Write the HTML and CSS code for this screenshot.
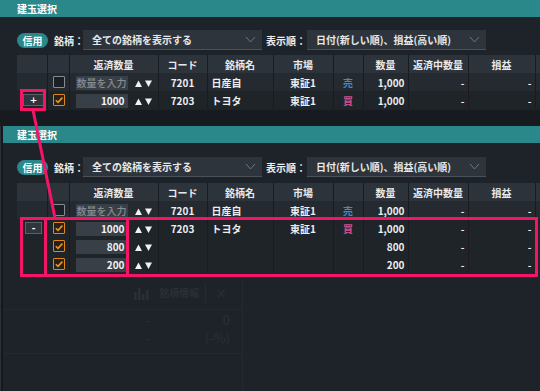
FILE: index.html
```html
<!DOCTYPE html>
<html lang="ja">
<head>
<meta charset="utf-8">
<title>建玉選択</title>
<link rel="stylesheet" href="styles.css">
</head>
<body>
<div class="screen">
  <section class="panel panel-top">
    <div class="titlebar">建玉選択</div>
    <div class="filters">
      <span class="pill">信用</span>
      <span class="flabel flabel-1">銘柄：</span>
      <div class="select">全ての銘柄を表示する<svg class="chev" width="11" height="7" viewBox="0 0 11 7"><polyline points="1,1 5.5,6 10,1"/></svg></div>
      <span class="flabel flabel-2">表示順：</span>
      <div class="select">日付(新しい順)、損益(高い順)<svg class="chev" width="11" height="7" viewBox="0 0 11 7"><polyline points="1,1 5.5,6 10,1"/></svg></div>
    </div>
    <table class="grid">
      <colgroup>
        <col class="w30"><col class="w22"><col class="w89"><col class="w49"><col class="w66"><col class="w60"><col class="w30"><col class="w45"><col class="w60"><col class="w67"><col class="w40">
      </colgroup>
      <thead>
        <tr><th></th><th></th><th>返済数量</th><th>コード</th><th>銘柄名</th><th>市場</th><th></th><th>数量</th><th>返済中数量</th><th>損益</th><th></th></tr>
      </thead>
      <tbody>
        <tr class="alt">
          <td></td>
          <td class="c-cb"><span class="cb"></span></td>
          <td class="c-qty"><span class="qty ph">数量を入力</span><svg class="arrows" width="17" height="7" viewBox="0 0 17 7"><polygon points="0,7 3.5,0.5 7,7"/><polygon points="10,0.5 17,0.5 13.5,7"/></svg></td>
          <td class="ctr">7201</td>
          <td class="lft">日産自</td>
          <td class="ctr">東証1</td>
          <td class="ctr sell">売</td>
          <td class="rgt">1,000</td>
          <td class="rgt">-</td>
          <td class="rgt">-</td>
          <td></td>
        </tr>
        <tr>
          <td class="c-btn"><span class="tbtn">+</span></td>
          <td class="c-cb"><span class="cb on"><svg width="10" height="10" viewBox="0 0 10 10"><polyline points="1.8,5.2 4,7.4 8.4,2.6"/></svg></span></td>
          <td class="c-qty"><span class="qty">1000</span><svg class="arrows" width="17" height="7" viewBox="0 0 17 7"><polygon points="0,7 3.5,0.5 7,7"/><polygon points="10,0.5 17,0.5 13.5,7"/></svg></td>
          <td class="ctr">7203</td>
          <td class="lft">トヨタ</td>
          <td class="ctr">東証1</td>
          <td class="ctr buy">買</td>
          <td class="rgt">1,000</td>
          <td class="rgt">-</td>
          <td class="rgt">-</td>
          <td></td>
        </tr>
      </tbody>
    </table>
  </section>

  <section class="panel panel-bottom">
    <div class="titlebar">建玉選択</div>
    <div class="filters filters-b">
      <span class="pill">信用</span>
      <span class="flabel flabel-1">銘柄：</span>
      <div class="select">全ての銘柄を表示する<svg class="chev" width="11" height="7" viewBox="0 0 11 7"><polyline points="1,1 5.5,6 10,1"/></svg></div>
      <span class="flabel flabel-2">表示順：</span>
      <div class="select">日付(新しい順)、損益(高い順)<svg class="chev" width="11" height="7" viewBox="0 0 11 7"><polyline points="1,1 5.5,6 10,1"/></svg></div>
    </div>
    <table class="grid grid-b">
      <colgroup>
        <col class="w30"><col class="w22"><col class="w89"><col class="w49"><col class="w66"><col class="w60"><col class="w30"><col class="w45"><col class="w60"><col class="w67"><col class="w40">
      </colgroup>
      <thead>
        <tr><th></th><th></th><th>返済数量</th><th>コード</th><th>銘柄名</th><th>市場</th><th></th><th>数量</th><th>返済中数量</th><th>損益</th><th></th></tr>
      </thead>
      <tbody>
        <tr class="alt">
          <td></td>
          <td class="c-cb"><span class="cb"></span></td>
          <td class="c-qty"><span class="qty ph">数量を入力</span><svg class="arrows" width="17" height="7" viewBox="0 0 17 7"><polygon points="0,7 3.5,0.5 7,7"/><polygon points="10,0.5 17,0.5 13.5,7"/></svg></td>
          <td class="ctr">7201</td>
          <td class="lft">日産自</td>
          <td class="ctr">東証1</td>
          <td class="ctr sell">売</td>
          <td class="rgt">1,000</td>
          <td class="rgt">-</td>
          <td class="rgt">-</td>
          <td></td>
        </tr>
        <tr>
          <td class="c-btn"><span class="tbtn tbtn-minus">-</span></td>
          <td class="c-cb"><span class="cb on"><svg width="10" height="10" viewBox="0 0 10 10"><polyline points="1.8,5.2 4,7.4 8.4,2.6"/></svg></span></td>
          <td class="c-qty"><span class="qty">1000</span><svg class="arrows" width="17" height="7" viewBox="0 0 17 7"><polygon points="0,7 3.5,0.5 7,7"/><polygon points="10,0.5 17,0.5 13.5,7"/></svg></td>
          <td class="ctr">7203</td>
          <td class="lft">トヨタ</td>
          <td class="ctr">東証1</td>
          <td class="ctr buy">買</td>
          <td class="rgt">1,000</td>
          <td class="rgt">-</td>
          <td class="rgt">-</td>
          <td></td>
        </tr>
        <tr>
          <td></td>
          <td class="c-cb"><span class="cb on"><svg width="10" height="10" viewBox="0 0 10 10"><polyline points="1.8,5.2 4,7.4 8.4,2.6"/></svg></span></td>
          <td class="c-qty"><span class="qty">800</span><svg class="arrows" width="17" height="7" viewBox="0 0 17 7"><polygon points="0,7 3.5,0.5 7,7"/><polygon points="10,0.5 17,0.5 13.5,7"/></svg></td>
          <td></td><td></td><td></td><td></td>
          <td class="rgt">800</td>
          <td class="rgt">-</td>
          <td class="rgt">-</td>
          <td></td>
        </tr>
        <tr>
          <td></td>
          <td class="c-cb"><span class="cb on"><svg width="10" height="10" viewBox="0 0 10 10"><polyline points="1.8,5.2 4,7.4 8.4,2.6"/></svg></span></td>
          <td class="c-qty"><span class="qty">200</span><svg class="arrows" width="17" height="7" viewBox="0 0 17 7"><polygon points="0,7 3.5,0.5 7,7"/><polygon points="10,0.5 17,0.5 13.5,7"/></svg></td>
          <td></td><td></td><td></td><td></td>
          <td class="rgt">200</td>
          <td class="rgt">-</td>
          <td class="rgt">-</td>
          <td></td>
        </tr>
      </tbody>
    </table>

    <div class="ghost">
      <div class="ghost-head">
        <svg class="ghost-icon" width="16" height="14" viewBox="0 0 16 14"><rect x="1" y="6" width="2.5" height="8"/><rect x="5" y="2" width="2.5" height="12"/><rect x="9" y="8" width="2.5" height="6"/><rect x="13" y="4" width="2.5" height="10"/></svg>
        <span class="ghost-title">銘柄情報</span>
        <span class="ghost-sep"></span>
        <span class="ghost-x">×</span>
      </div>
      <div class="ghost-row"><span>-</span><span class="ghost-val">0</span></div>
      <div class="ghost-row ghost-row-last"><span>-</span><span class="ghost-val">(-%)</span></div>
    </div>
  </section>

  <svg class="annot" width="540" height="391" viewBox="0 0 540 391">
    <rect x="21.5" y="90.5" width="23" height="19"/>
    <line x1="33" y1="110" x2="55" y2="218"/>
    <rect x="21.5" y="218.5" width="515" height="57"/>
    <line x1="45.5" y1="218" x2="45.5" y2="276"/>
    <line x1="127.5" y1="218" x2="127.5" y2="276"/>
  </svg>
</div>
</body>
</html>
```

FILE: styles.css
```css
* {
  box-sizing: border-box;
  margin: 0;
  padding: 0;
}

html,
body {
  width: 540px;
  height: 391px;
  overflow: hidden;
}

body {
  background: #171b20;
  font-family: "Noto Sans CJK JP", "Noto Sans", sans-serif;
  font-size: 10px;
  font-weight: 700;
  color: #eceef0;
}

.screen {
  position: relative;
  width: 540px;
  height: 391px;
  display: flex;
  flex-direction: column;
  gap: 16px;
}

.panel {
  background: #1e2329;
  overflow: hidden;
}

.panel-top {
  height: 110px;
  flex: none;
}

.panel-bottom {
  position: relative;
  flex: 1;
  display: flex;
  flex-direction: column;
}

.panel-bottom::before {
  content: "";
  position: absolute;
  left: 0;
  top: 0;
  bottom: 0;
  width: 2px;
  background: #15191d;
  border-left: 1px solid #2b3137;
  z-index: 2;
}

.titlebar {
  height: 17px;
  line-height: 17px;
  background: #2a878a;
  padding-left: 17px;
  color: #ffffff;
  font-size: 10px;
  flex: none;
}

.filters {
  display: flex;
  align-items: center;
  height: 20px;
  margin-top: 13px;
  padding-left: 17px;
  flex: none;
}

.filters-b {
  margin-top: 14px;
}

.pill {
  width: 31px;
  height: 15px;
  line-height: 15px;
  border-radius: 8px;
  background: #2a878a;
  color: #ffffff;
  text-align: center;
  margin-right: 6px;
}

.flabel {
  white-space: nowrap;
}

.flabel-1 {
  width: 29px;
}

.flabel-2 {
  width: 41px;
}

.select {
  width: 179px;
  height: 20px;
  background: #2e343b;
  border-bottom: 1px solid #4a5158;
  padding: 0 6px 0 9px;
  display: flex;
  align-items: center;
  justify-content: space-between;
  margin-right: 4px;
  white-space: nowrap;
  color: #e6e8ea;
}

.chev polyline {
  fill: none;
  stroke: #6f767d;
  stroke-width: 1;
}

.grid {
  margin: 5px 0 0 17px;
  border-collapse: collapse;
  table-layout: fixed;
  width: 558px;
  flex: none;
}

.grid-b {
  margin-top: 6px;
}

.w30 { width: 30px; }
.w22 { width: 22px; }
.w89 { width: 89px; }
.w49 { width: 49px; }
.w66 { width: 66px; }
.w60 { width: 60px; }
.w45 { width: 45px; }
.w67 { width: 67px; }
.w40 { width: 40px; }

.grid th,
.grid td {
  height: 18px;
  padding: 0 3px;
  border-right: 1px solid #181c21;
  white-space: nowrap;
  overflow: hidden;
  vertical-align: middle;
}

.grid th {
  background: #2c333a;
  text-align: center;
  color: #e8eaec;
}

.grid td {
  background: #1f2429;
}

.grid tr.alt td {
  background: #242a30;
}

.ctr { text-align: center; }
.lft { text-align: left; }
.grid td.lft { padding-left: 4px; }
.rgt { text-align: right; }

.sell { color: #3a8cd6; }
.buy { color: #d0508c; }

.grid td.c-cb {
  padding: 0 0 0 5px;
}

.cb {
  display: block;
  width: 12px;
  height: 12px;
  border: 1px solid #858b91;
  border-radius: 1px;
  background: #1b2025;
}

.cb.on {
  border-color: #de871e;
  background: #262219;
}

.cb svg {
  display: block;
}

.cb polyline {
  fill: none;
  stroke: #ef941f;
  stroke-width: 1.6;
}

.grid td.c-qty {
  padding: 0 0 0 6px;
}

.qty {
  display: inline-block;
  vertical-align: middle;
  width: 52px;
  height: 14px;
  line-height: 14px;
  background: #393f46;
  text-align: right;
  padding-right: 3px;
  color: #f2f4f6;
}

.qty.ph {
  text-align: center;
  padding: 0;
  color: #868c92;
  font-weight: 500;
}

.arrows {
  display: inline-block;
  vertical-align: middle;
  margin-left: 7px;
}

.arrows polygon {
  fill: #f0f2f4;
}

.grid td.c-btn {
  padding: 0 0 0 6px;
}

.tbtn {
  display: block;
  width: 21px;
  height: 12px;
  line-height: 10px;
  background: #2f353c;
  border: 1px solid #5b6168;
  text-align: center;
  color: #ffffff;
  font-family: "DejaVu Sans", sans-serif;
  font-size: 9px;
}

.tbtn-minus {
  width: 17px;
  margin-left: 2px;
}

.ghost {
  flex: 1;
  width: 243px;
  margin-top: 3px;
  border-right: 1px solid #232930;
  color: #293037;
}

.ghost-head {
  height: 34px;
  display: flex;
  align-items: center;
  justify-content: flex-end;
  padding-right: 15px;
  border-bottom: 1px solid #232930;
}

.ghost-icon rect {
  fill: #283036;
}

.ghost-title {
  margin-left: 10px;
  font-size: 10px;
}

.ghost-sep {
  width: 1px;
  height: 20px;
  background: #252b31;
  margin: 0 9px 0 6px;
}

.ghost-x {
  font-family: "DejaVu Sans", sans-serif;
  font-size: 14px;
  font-weight: 400;
}

.ghost-row {
  display: grid;
  grid-template-columns: 150px 1fr;
  height: 18px;
  align-items: center;
  padding-right: 12px;
}

.ghost-row span:first-child {
  text-align: right;
}

.ghost-val {
  text-align: right;
  font-size: 13px;
  font-weight: 400;
}

.ghost-row:first-of-type {
  margin-top: 6px;
}

.ghost-row-last {
  border-bottom: 1px solid #232930;
  height: 26px;
  padding-bottom: 8px;
}

.annot {
  position: absolute;
  left: 0;
  top: 0;
  pointer-events: none;
  z-index: 5;
}

.annot rect,
.annot line {
  fill: none;
  stroke: #f61466;
  stroke-width: 3;
}
```
